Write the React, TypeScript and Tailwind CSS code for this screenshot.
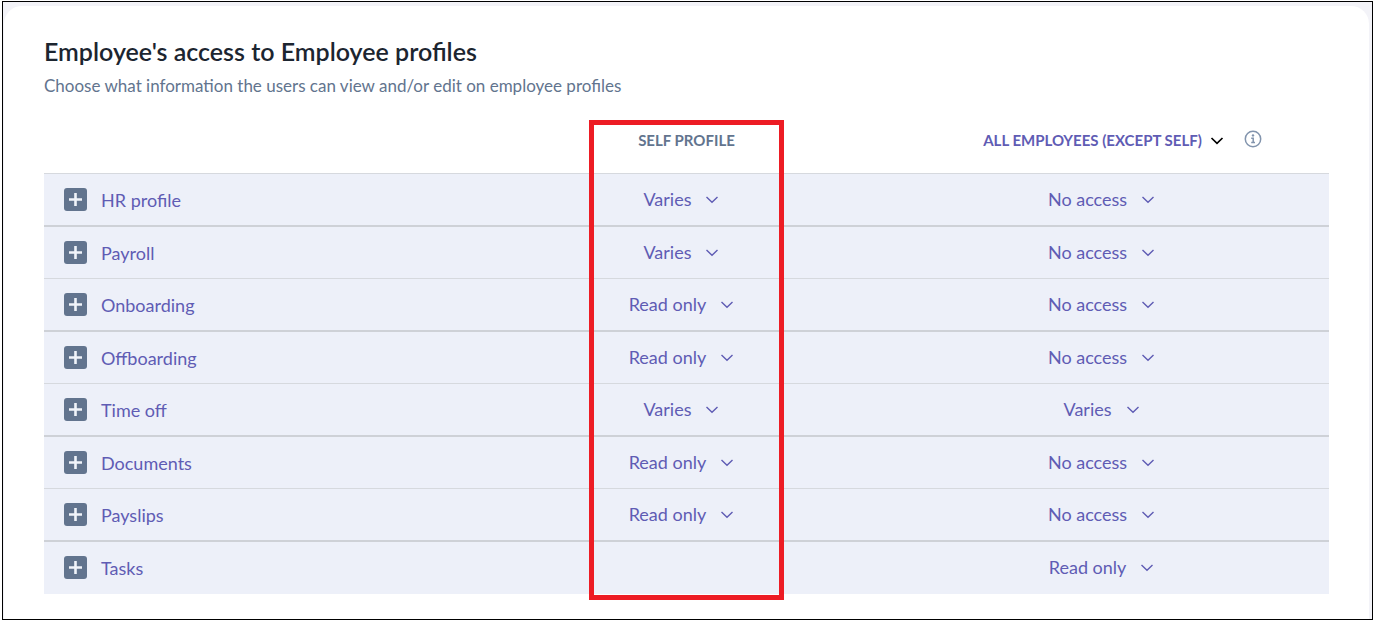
import { useState } from "react";

type Access = "Varies" | "No access" | "Read only" | "Can edit";

interface Section {
  name: string;
  self?: Access;
  others: Access;
}

const options: Access[] = ["No access", "Read only", "Can edit", "Varies"];
const audiences = ["ALL EMPLOYEES (EXCEPT SELF)", "DIRECT REPORTS"];

const sections: Section[] = [
  { name: "HR profile", self: "Varies", others: "No access" },
  { name: "Payroll", self: "Varies", others: "No access" },
  { name: "Onboarding", self: "Read only", others: "No access" },
  { name: "Offboarding", self: "Read only", others: "No access" },
  { name: "Time off", self: "Varies", others: "Varies" },
  { name: "Documents", self: "Read only", others: "No access" },
  { name: "Payslips", self: "Read only", others: "No access" },
  { name: "Tasks", others: "Read only" },
];

function Chevron({ className }: { className: string }) {
  return (
    <svg viewBox="0 0 14 14" fill="none" stroke="currentColor" aria-hidden="true" className={className}>
      <path d="M1.5 5 7 10.3 12.5 5" />
    </svg>
  );
}

function PlusSquare() {
  return (
    <svg viewBox="0 0 23 23" aria-hidden="true" className="size-[23px] shrink-0">
      <rect width="23" height="23" rx="3" fill="#62748e" />
      <path d="M11.5 5v13M5 11.5h13" stroke="#f1f4fa" strokeWidth="2.6" />
    </svg>
  );
}

function InfoIcon() {
  return (
    <svg viewBox="0 0 18 18" aria-hidden="true" className="size-[18px]">
      <circle cx="9" cy="9" r="7.7" fill="none" stroke="#8294ad" strokeWidth="1.5" />
      <circle cx="9" cy="5.4" r="1.2" fill="#8294ad" />
      <path d="M7.2 8.2h2v4.4M7.2 12.6h3.8" fill="none" stroke="#8294ad" strokeWidth="1.5" />
    </svg>
  );
}

interface PickerProps {
  label: string;
  initial: string;
  choices: string[];
  className: string;
  chevron: string;
}

/* The label shows the chosen value; the native select lies over it and takes the clicks. */
function Picker({ label, initial, choices, className, chevron }: PickerProps) {
  const [value, setValue] = useState(initial);
  return (
    <label className={`relative inline-flex items-center ${className}`}>
      <span>{value}</span>
      <Chevron className={chevron} />
      <select
        aria-label={label}
        value={value}
        onChange={(e) => setValue(e.target.value)}
        className="absolute inset-0 w-full cursor-pointer opacity-0"
      >
        {choices.map((c) => (
          <option key={c}>{c}</option>
        ))}
      </select>
    </label>
  );
}

function AccessPicker({ label, initial }: { label: string; initial: Access }) {
  return (
    <Picker
      label={label}
      initial={initial}
      choices={options}
      className="gap-[14px] text-lg leading-6"
      chevron="size-[14px] stroke-[1.4]"
    />
  );
}

export default function App() {
  return (
    <div className="flex min-h-screen flex-col bg-white px-0.5 pt-px font-['Lato',sans-serif]">
      <div className="flex grow flex-col border border-black bg-[#f3f3f8] pt-1 pr-[3px] pl-px">
        <main className="grow rounded-t-[18px] bg-white px-10 pt-8 pb-[18px]">
          <h1 className="text-[25px] leading-[26px] font-semibold text-[#1c2530]">
            Employee's access to Employee profiles
          </h1>
          <p className="mt-[10px] text-[17px] leading-6 text-[#62748e]">
            Choose what information the users can view and/or edit on employee profiles
          </p>

          <div className="relative mt-[22px]">
            <table className="w-full table-fixed border-separate border-spacing-0 border-b border-[#edf0f9] text-[#5f5cb4]">
              <thead>
                <tr className="h-[53px] align-top text-[15px] leading-5">
                  <th scope="col" aria-label="Section" className="w-[34%]" />
                  <th scope="col" className="w-[32%] pt-[10px] font-bold text-[#62748e]">
                    SELF PROFILE
                  </th>
                  <th scope="col" className="w-[34%] pl-6 font-bold">
                    <div className="flex justify-center pt-[10px]">
                      <Picker
                        label="Audience"
                        initial={audiences[0]}
                        choices={audiences}
                        className="gap-2"
                        chevron="size-[14px] stroke-[1.7] text-black"
                      />
                      <button type="button" aria-label="More information" className="ml-5 h-4">
                        <InfoIcon />
                      </button>
                    </div>
                  </th>
                </tr>
              </thead>
              <tbody className="[&>tr:nth-child(even)]:h-[53px] [&>tr:nth-child(even)>*]:border-t-2 [&>tr:nth-child(even)>*]:border-[#ced1d7] [&>tr:nth-child(odd)]:h-[52px] [&>tr:nth-child(odd)>*]:border-t [&>tr:nth-child(odd)>*]:border-[#d6d9de]">
                {sections.map((s) => (
                  <tr key={s.name} className="bg-[#edf0f9]">
                    <th scope="row" className="pl-5 text-left font-normal">
                      <button type="button" aria-expanded="false" className="flex cursor-pointer items-center gap-[14px] text-lg leading-6">
                        <PlusSquare />
                        {s.name}
                      </button>
                    </th>
                    <td className="pr-[10px] text-center">
                      {s.self && <AccessPicker label={`${s.name}, self profile`} initial={s.self} />}
                    </td>
                    <td className="pr-[18px] text-center">
                      <AccessPicker label={`${s.name}, all employees`} initial={s.others} />
                    </td>
                  </tr>
                ))}
              </tbody>
            </table>
            <div className="pointer-events-none absolute inset-x-0 top-0 -bottom-[6px] mx-auto w-[195px] border-[5px] border-[#ed1c24]" />
          </div>
        </main>
      </div>
    </div>
  );
}
